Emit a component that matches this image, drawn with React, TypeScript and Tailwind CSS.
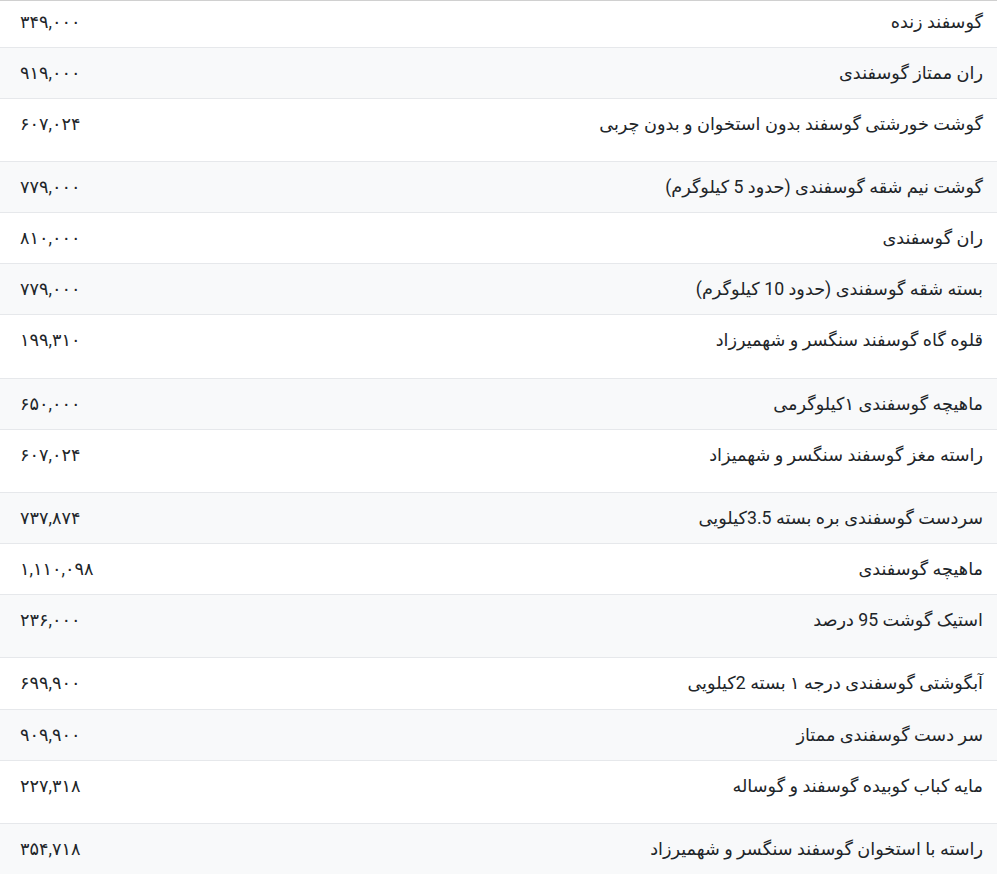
const rows: { name: string; price: string; tall?: boolean }[] = [
  { name: "گوسفند زنده", price: "۳۴۹,۰۰۰" },
  { name: "ران ممتاز گوسفندی", price: "۹۱۹,۰۰۰" },
  { name: "گوشت خورشتی گوسفند بدون استخوان و بدون چربی", price: "۶۰۷,۰۲۴", tall: true },
  { name: "گوشت نیم شقه گوسفندی (حدود 5 کیلوگرم)", price: "۷۷۹,۰۰۰" },
  { name: "ران گوسفندی", price: "۸۱۰,۰۰۰" },
  { name: "بسته شقه گوسفندی (حدود 10 کیلوگرم)", price: "۷۷۹,۰۰۰" },
  { name: "قلوه گاه گوسفند سنگسر و شهمیرزاد", price: "۱۹۹,۳۱۰", tall: true },
  { name: "ماهیچه گوسفندی ۱کیلوگرمی", price: "۶۵۰,۰۰۰" },
  { name: "راسته مغز گوسفند سنگسر و شهمیزاد", price: "۶۰۷,۰۲۴", tall: true },
  { name: "سردست گوسفندی بره بسته 3.5کیلویی", price: "۷۳۷,۸۷۴" },
  { name: "ماهیچه گوسفندی", price: "۱,۱۱۰,۰۹۸" },
  { name: "استیک گوشت 95 درصد", price: "۲۳۶,۰۰۰", tall: true },
  { name: "آبگوشتی گوسفندی درجه ۱ بسته 2کیلویی", price: "۶۹۹,۹۰۰" },
  { name: "سر دست گوسفندی ممتاز", price: "۹۰۹,۹۰۰" },
  { name: "مایه کباب کوبیده گوسفند و گوساله", price: "۲۲۷,۳۱۸", tall: true },
  { name: "راسته با استخوان گوسفند سنگسر و شهمیرزاد", price: "۳۵۴,۷۱۸" },
];

export default function App() {
  return (
    <div
      dir="rtl"
      className="w-[997px] h-[874px] overflow-hidden bg-white text-[17.7px] leading-[26.15px] text-[#212529]"
      style={{ fontFamily: "Roboto, 'DejaVu Sans', sans-serif" }}
    >
      <table className="w-full border-collapse border-t border-[#d0d0d0]">
        <tbody>
          {rows.map((r, i) => {
            const first = i === 0;
            const pad =
              (first ? "pt-[7.5px] " : "border-t border-[#e6e8eb] pt-3 ") +
              (r.tall ? "pb-6" : "pb-3");
            return (
              <tr
                key={i}
                className={i % 2 === 1 ? "bg-[#f8f9fa]" : "bg-white"}
              >
                <td className={"align-top text-right pr-[14px] pl-3 " + pad}>
                  {r.name}
                </td>
                <td className={"align-top text-left pl-[20px] pr-3 w-[200px] " + pad}>
                  <span dir="ltr">{r.price}</span>
                </td>
              </tr>
            );
          })}
        </tbody>
      </table>
    </div>
  );
}
